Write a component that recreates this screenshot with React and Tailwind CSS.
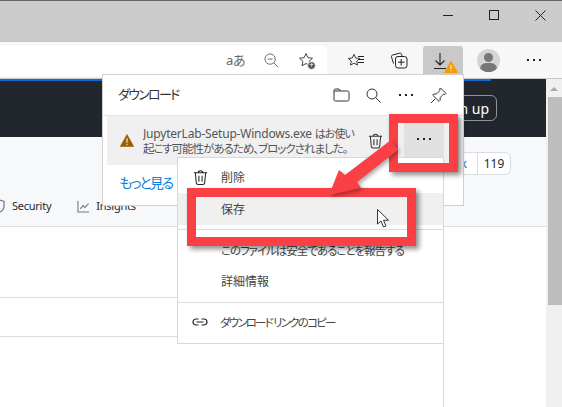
import React from 'react';

// toolbar + panel icons, all hand drawn to follow the Edge glyphs
function Star({ className }) {
  return (
    <svg viewBox="0 0 16 16" fill="none" stroke="currentColor" strokeWidth="1" className={className}>
      <path d="M8 1.500l1.900 4.200 4.600.5-3.400 3.100.9 4.500L8 11.500l-4 2.300.9-4.500L1.500 6.200l4.600-.5z" strokeLinejoin="round" />
    </svg>
  );
}

function Trash({ className }) {
  return (
    <svg viewBox="0 0 16 17" fill="none" stroke="currentColor" strokeWidth="1.100" className={className}>
      <path d="M1 3.500h14M5.500 3.500c0-3 5-3 5 0M2.500 3.500l1 10.500c.1 1.200.9 2 2 2h5c1.100 0 1.900-.8 2-2l1-10.500M6.300 6.500v6.500M9.700 6.500v6.500" />
    </svg>
  );
}

function Warning({ className }) {
  return (
    <svg viewBox="0 0 14 13" className={className}>
      <path d="M7 .5l6.800 12.100H.2z" fill="currentColor" stroke="currentColor" strokeWidth="0.6" strokeLinejoin="round" />
      <path d="M6.400 4.300h1.200v4.500H6.400zM6.400 9.700h1.200v1.200H6.400z" fill="#f3e3c8" />
    </svg>
  );
}

function Dots({ className = '' }) {
  return (
    <div className={`flex gap-[4px] ${className}`}>
      <span className="w-[2px] h-[2px] bg-[#222]" />
      <span className="w-[2px] h-[2px] bg-[#222]" />
      <span className="w-[2px] h-[2px] bg-[#222]" />
    </div>
  );
}

function MenuRow({ icon, label, className = '', textClass = '' }) {
  return (
    <div className={`flex items-center whitespace-nowrap ${className}`}>
      <div className="w-[43px] flex justify-end pr-[13px] shrink-0">{icon}</div>
      <span className={`pt-[2px] ${textClass}`}>{label}</span>
    </div>
  );
}

export default function App() {
  return (
    <div
      className="relative w-[562px] h-[407px] overflow-hidden flex flex-col bg-white text-[#333] [font-feature-settings:'palt']"
      style={{ fontFamily: '"Noto Sans", "Noto Sans CJK JP", sans-serif' }}
    >
      {/* title bar */}
      <div className="h-[41px] shrink-0 bg-[#cccccc] border-t border-[#666] flex justify-end items-start text-[#222]">
        <div className="w-[46px] h-[28px] flex items-center justify-center">
          <div className="w-[10px] h-px bg-[#222] mt-px" />
        </div>
        <div className="w-[46px] h-[28px] flex items-center justify-center">
          <div className="w-[10px] h-[10px] border border-[#222]" />
        </div>
        <div className="w-[46px] h-[28px] flex items-center justify-center mr-[-1px]">
          <svg viewBox="0 0 11 11" className="w-[11px] h-[11px]" stroke="#222" strokeWidth="1">
            <path d="M.5.5l10 10M10.500.5l-10 10" />
          </svg>
        </div>
      </div>

      {/* toolbar */}
      <div className="h-[38px] shrink-0 bg-[#f7f7f7] border-y border-[#c8c8c8] flex items-center">
        <div className="w-[327px] h-[30px] mt-[1px] bg-white rounded-r-[4px] flex items-center justify-end text-[#666]">
          <span className="text-[13px] mr-[19px] leading-none tracking-[-0.5px]">aあ</span>
          <svg viewBox="0 0 16 16" fill="none" stroke="currentColor" strokeWidth="1" className="w-[15px] h-[15px] mr-[19px]">
            <circle cx="6.500" cy="6.500" r="5.500" />
            <path d="M10.500 10.500l4.500 4.500M4 6.500h5" />
          </svg>
          <div className="relative w-[18px] h-[18px] mr-[11px] text-[#444]">
            <Star className="w-[16px] h-[16px]" />
            <div className="absolute right-0 bottom-0 w-[9px] h-[9px] rounded-full bg-[#555] border border-white flex items-center justify-center text-white text-[8px] leading-none">+</div>
          </div>
        </div>
        <div className="relative w-[17px] h-[18px] ml-[20px] text-[#222]">
          <Star className="w-[14px] h-[14px] mt-[2px]" />
          <div className="absolute right-0 top-[5px] w-[6px] h-[7px] border-y border-[#222] flex items-center"><div className="w-full h-px bg-[#222]" /></div>
        </div>
        <svg viewBox="0 0 18 18" fill="none" stroke="#222" strokeWidth="1" className="w-[18px] h-[18px] ml-[26px]">
          <path d="M3.500 12.500L1.500 6c-.3-1 .2-1.800 1.200-2l7-1.800c1-.2 1.800.3 2 1.300L12 5.500" />
          <rect x="5.500" y="5.500" width="11.500" height="11.500" rx="2.500" />
          <path d="M11.200 8v6.500M8 11.200h6.500" />
        </svg>
        <div className="relative w-[40px] h-[30px] ml-[15px] mt-[1px] bg-[#c9c9c9] rounded-t-[3px] flex items-center justify-center">
          <svg viewBox="0 0 14 18" fill="none" stroke="#222" strokeWidth="1.100" className="w-[14px] h-[18px] mr-[7px]">
            <path d="M7 1v12M2.500 8.500L7 13l4.500-4.500M1 16.500h12" />
          </svg>
          <svg viewBox="0 0 14 12" className="absolute left-[21px] top-[15px] w-[14px] h-[12px]">
            <path d="M7 .5l6.500 11H.5z" fill="#f59a00" stroke="#f59a00" strokeLinejoin="round" />
            <path d="M6.500 4h1v4h-1zM6.500 9h1v1h-1z" fill="#fff" />
          </svg>
        </div>
        <div className="relative w-[23px] h-[23px] ml-[14px] rounded-full bg-[#d4d4d4] overflow-hidden">
          <div className="absolute left-[7px] top-[4px] w-[9px] h-[9px] rounded-full bg-[#777]" />
          <div className="absolute left-[3px] top-[14px] w-[17px] h-[12px] rounded-full bg-[#777]" />
        </div>
        <Dots className="ml-[27px]" />
      </div>

      {/* page + scrollbar */}
      <div className="flex-1 flex min-h-0">
        <div className="flex-1 flex flex-col min-w-0">
          <div className="h-[2px] shrink-0 bg-[#22272e]"><div className="w-[491px] h-full bg-[#0a6cd6]" /></div>
          <div className="h-[56px] shrink-0 bg-[#22272e] flex items-start justify-end pr-[49px] pt-[14px]">
            <div className="h-[26px] px-[7px] border border-[#8b949e] rounded-[6px] flex items-center text-white text-[14px] whitespace-nowrap">Sign up</div>
          </div>
          <div className="h-[90px] shrink-0 bg-[#f6f8fa] border-b border-[#d8dee4] flex flex-col">
            <div className="flex justify-end pr-[35px] pt-[15px]">
              <div className="h-[23px] flex items-center bg-white border border-[#d8dee4] rounded-[6px] text-[12px] text-[#24292f]">
                <span className="pl-[8px] pr-[10px] text-[#0969da]">Fork</span>
                <span className="h-full w-px bg-[#d8dee4]" />
                <span className="w-[32px] text-center">119</span>
              </div>
            </div>
            <div className="flex items-center mt-[23px] text-[11px] tracking-[-0.25px] text-[#24292f] -ml-[10px]">
              <svg viewBox="0 0 16 16" fill="none" stroke="#6e7781" strokeWidth="1.200" className="w-[16px] h-[16px] mr-[6px]">
                <path d="M8 1.500l6 2v4.500c0 3.500-2.500 5.800-6 7-3.500-1.200-6-3.500-6-7V3.500z" />
              </svg>
              <span>Security</span>
              <svg viewBox="0 0 14 14" fill="none" stroke="#6e7781" strokeWidth="1.100" className="w-[13px] h-[13px] ml-[26px] mr-[6px]">
                <path d="M1 1v12h12M3.500 9.500l3-3.500 2 2 4-4" />
              </svg>
              <span>Insights</span>
            </div>
          </div>
          <div className="w-[177px] h-[71px] border-b border-[#d8dee4]" />
          <div className="w-[177px] h-[39px] border-b border-[#d8dee4]" />
        </div>
        <div className="w-[16px] shrink-0 bg-[#f0f0f0] flex flex-col items-end">
          <div className="w-full h-[18px] flex items-center justify-center pt-[2px]">
            <div className="border-x-[4px] border-x-transparent border-b-[4px] border-b-[#a8a8a8]" />
          </div>
          <div className="w-[14px] h-[208px] bg-[#bdbdbd]" />
        </div>
      </div>

      {/* download panel */}
      <div className="absolute left-[102px] top-[74px] w-[362px] h-[132px] bg-white border border-[#d0d0d0] flex flex-col">
        <div className="h-[41px] shrink-0 flex items-center border-b border-[#e6e6e6]">
          <span className="ml-[15px] text-[13px] tracking-[-1.700px] text-[#333] flex-1">ダウンロード</span>
          <svg viewBox="0 0 17 14" fill="none" stroke="#333" strokeWidth="1" className="w-[17px] h-[14px] mr-[16px]">
            <path d="M1 12V2.500C1 1.700 1.500 1 2.500 1H6l1.500 2H14.500c1 0 1.500.7 1.500 1.500V11.500c0 1-.5 1.500-1.500 1.500h-12C1.500 13 1 12.500 1 12zM1 3h6.500" />
          </svg>
          <svg viewBox="0 0 15 15" fill="none" stroke="#333" strokeWidth="1" className="w-[15px] h-[15px] mr-[18px]">
            <circle cx="6" cy="6" r="5" />
            <path d="M9.500 9.500l5 5" />
          </svg>
          <Dots className="mr-[17px]" />
          <svg viewBox="0 0 17 17" fill="none" stroke="#333" strokeWidth="1" className="w-[17px] h-[17px] mr-[16px]">
            <path d="M10.500 1L16 6.500l-1 1-1.500-.3-3.200 3.200-.3 3-1 1-6.300-6.300 1-1 3-.3L9.900 3.600l-.3-1.600zM5.300 11.700L1 16" strokeLinejoin="round" />
          </svg>
        </div>
        <div className="h-[49px] mx-[4px] mt-0 bg-[#f0f0f0] flex items-center relative">
          <Warning className="w-[14px] h-[13px] ml-[13px] text-[#9d5d00] shrink-0" />
          <div className="ml-[9px] w-[212px] text-[12px] leading-[15px] text-[#555] whitespace-nowrap overflow-hidden">
            <div className="tracking-[-0.2px]">JupyterLab-Setup-Windows.exe <span className="text-[11px] tracking-[-1px]">はお使い</span></div>
            <div className="text-[11.500px] tracking-[-1px]">起こす可能性があるため、ブロックされました。</div>
          </div>
          <Trash className="w-[15px] h-[16px] ml-[13px] text-[#333] shrink-0" />
          <div className="absolute right-[15px] top-0 bottom-0 w-[40px] bg-[#e0e0e0] flex justify-center items-start pt-[22px]">
            <Dots />
          </div>
        </div>
        <div className="ml-[16px] mt-[7px] text-[14px] tracking-[-2px] text-[#0f7fe0]">もっと見る</div>
      </div>

      {/* context menu */}
      <div className="absolute left-[177px] top-[157px] w-[267px] h-[187px] bg-white border border-[#d8d8d8] text-[12px] text-[#444] flex flex-col pt-[3px]">
        <MenuRow label="削除" className="h-[32px]" icon={<Trash className="w-[15px] h-[17px] text-[#222]" />} />
        <MenuRow label="保存" className="h-[32px] bg-[#f0f0f0]" />
        <div className="h-px shrink-0 bg-[#dcdcdc] mt-[4px] mb-[4px]" />
        <MenuRow label="このファイルは安全であることを報告する" className="h-[31px]" textClass="text-[11.500px] tracking-[-1px]" />
        <MenuRow label="詳細情報" className="h-[32px]" />
        <div className="h-px shrink-0 bg-[#dcdcdc] mt-[5px] mb-[2px]" />
        <MenuRow
          label="ダウンロード リンクのコピー"
          className="h-[34px]"
          textClass="text-[11.500px] tracking-[-1.800px] -ml-[1px]"
          icon={
            <svg viewBox="0 0 16 8" fill="none" stroke="#222" strokeWidth="1.200" className="w-[16px] h-[8px]">
              <path d="M6.500 1H4a3 3 0 000 6h2.500M9.500 1H12a3 3 0 010 6H9.500M4.500 4h7" />
            </svg>
          }
        />
      </div>
      <div className="absolute left-[443px] top-[344px] bottom-0 w-px bg-[#d8d8d8]" />

      {/* red annotation boxes */}
      <div className="absolute left-[389px] top-[114px] w-[69px] h-[58px] border-[9px] border-[#fb4045] shadow-[3px_3px_5px_rgba(0,0,0,0.45)]" />
      <div className="absolute left-[187px] top-[188px] w-[229px] h-[58px] border-[9px] border-[#fb4045] shadow-[3px_3px_5px_rgba(0,0,0,0.45)]" />
      <svg viewBox="0 0 562 407" className="absolute inset-0 w-[562px] h-[407px] drop-shadow-[2px_2px_2px_rgba(0,0,0,0.35)]">
        <path d="M391 140L398 150 357 182 361 188 329 195 339 170 345 175z" fill="#fb4045" />
      </svg>

      {/* mouse pointer */}
      <svg viewBox="0 0 12 19" className="absolute left-[377px] top-[209px] w-[12px] h-[19px]">
        <path d="M.5.5v14.500l3.500-3 2.500 6 2.500-1-2.500-5.800h5z" fill="#fff" stroke="#333" strokeWidth="1" strokeLinejoin="round" />
      </svg>
    </div>
  );
}
